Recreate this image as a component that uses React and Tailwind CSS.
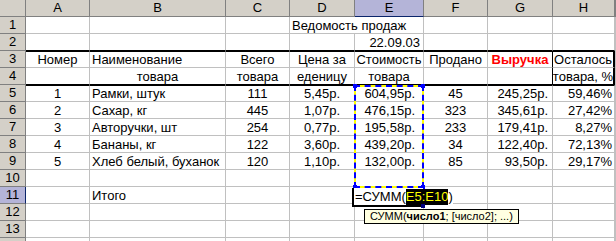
import * as React from "react";

const cols = ["A", "B", "C", "D", "E", "F", "G", "H"];

const rows = [
  ["1", "Рамки, штук", "111", "5,45р.", "604,95р.", "45", "245,25р.", "59,46%"],
  ["2", "Сахар, кг", "445", "1,07р.", "476,15р.", "323", "345,61р.", "27,42%"],
  ["3", "Авторучки, шт", "254", "0,77р.", "195,58р.", "233", "179,41р.", "8,27%"],
  ["4", "Бананы, кг", "122", "3,60р.", "439,20р.", "34", "122,40р.", "72,13%"],
  ["5", "Хлеб белый, буханок", "120", "1,10р.", "132,00р.", "85", "93,50р.", "29,17%"],
];

// alignment per column for data rows
const dataAlign = [
  "justify-center",
  "justify-start pl-[2px]",
  "justify-center",
  "justify-center",
  "justify-end pr-[8px]",
  "justify-center",
  "justify-end pr-[4px]",
  "justify-end pr-[2px]",
];

function Cell({ children, className = "" }) {
  return (
    <div
      className={`h-[17px] flex items-center whitespace-nowrap overflow-visible border-r border-b border-[#c0c0c0] leading-[16px] pt-[1px] ${className}`}
    >
      {children}
    </div>
  );
}

function ColHead({ label, active }) {
  return (
    <div
      className={`h-[17px] flex items-center justify-center border-r border-b border-r-[#808080] ${
        active ? "bg-[#b4b4d8] border-b-[#0a246a]" : "bg-[#d4d0c8] border-b-[#808080]"
      }`}
    >
      {label}
    </div>
  );
}

function RowHead({ n, hideLabel }) {
  const active = n === 11;
  return (
    <div
      className={`h-[17px] flex items-center justify-center border-r border-b border-b-[#808080] ${
        active ? "bg-[#b4b4d8] border-r-[#0a246a]" : "bg-[#d4d0c8] border-r-[#808080]"
      }`}
    >
      {hideLabel ? null : n}
    </div>
  );
}

function blankRow(n, hideLabel = false) {
  return [
    <RowHead key={`h${n}`} n={n} hideLabel={hideLabel} />,
    ...cols.map((c) => <Cell key={`${c}${n}`} />),
    <Cell key={`I${n}`} />,
  ];
}

export default function App() {
  const cells = [];

  // header
  cells.push(<div key="corner" className="h-[17px] bg-[#d4d0c8] border-r border-b border-[#808080]" />);
  cols.forEach((c) => cells.push(<ColHead key={c} label={c} active={c === "E"} />));
  cells.push(<ColHead key="I" label="" />);

  // row 1
  cells.push(<RowHead key="h1" n={1} />);
  cells.push(<Cell key="A1" />, <Cell key="B1" />, <Cell key="C1" />);
  cells.push(
    <Cell key="D1" className="col-span-2 pl-[2px]">
      Ведомость продаж
    </Cell>
  );
  cells.push(<Cell key="F1" />, <Cell key="G1" />, <Cell key="H1" />, <Cell key="I1" />);

  // row 2
  cells.push(<RowHead key="h2" n={2} />);
  ["A", "B", "C", "D"].forEach((c) => cells.push(<Cell key={`${c}2`} className="border-b-black" />));
  cells.push(
    <Cell key="E2" className="justify-end pr-[3px] border-b-black">
      22.09.03
    </Cell>
  );
  ["F", "G", "H"].forEach((c) => cells.push(<Cell key={`${c}2`} className="border-b-black" />));
  cells.push(<Cell key="I2" />);

  // rows 3-4 (headers)
  const h3 = ["Номер", "Наименование", "Всего", "Цена за", "Стоимость", "Продано", "Выручка", "Осталось"];
  const h4 = ["", "товара", "товара", "еденицу", "товара", "", "", "товара, %"];
  cells.push(<RowHead key="h3" n={3} />);
  h3.forEach((t, i) =>
    cells.push(
      <Cell
        key={`h3${i}`}
        className={`border-t border-t-black pt-0 ${i === 1 ? "justify-start pl-[2px]" : "justify-center"} ${
          i === 6 ? "font-bold text-[#ff0000] border-r-black" : ""
        } ${i === 7 ? "border-r-2 border-r-black" : ""}`}
      >
        {t}
      </Cell>
    )
  );
  cells.push(<Cell key="I3" />);
  cells.push(<RowHead key="h4" n={4} />);
  h4.forEach((t, i) =>
    cells.push(
      <Cell
        key={`h4${i}`}
        className={`justify-center border-b-black ${i === 6 ? "border-r-black" : ""} ${
          i === 7 ? "border-r-2 border-r-black" : ""
        }`}
      >
        {t}
      </Cell>
    )
  );
  cells.push(<Cell key="I4" />);

  // data rows 5-9
  rows.forEach((r, ri) => {
    const n = ri + 5;
    cells.push(<RowHead key={`h${n}`} n={n} />);
    r.forEach((v, i) =>
      cells.push(
        <Cell key={`${n}-${i}`} className={`${dataAlign[i]} ${ri === 0 ? "border-t border-t-black pt-0" : ""}`}>
          {v}
        </Cell>
      )
    );
    cells.push(<Cell key={`I${n}`} />);
  });

  // row 10
  cells.push(...blankRow(10));

  // row 11
  cells.push(<RowHead key="h11" n={11} />);
  cells.push(<Cell key="A11" />);
  cells.push(
    <Cell key="B11" className="pl-[2px]">
      Итого
    </Cell>
  );
  ["C", "D", "E", "F", "G", "H", "I"].forEach((c) => cells.push(<Cell key={`${c}11`} />));

  cells.push(...blankRow(12));
  cells.push(...blankRow(13));
  cells.push(...blankRow(14, true));

  return (
    <div className="w-[616px] h-[241px] overflow-hidden bg-white text-[13px] text-black font-['Liberation_Sans',Arial,sans-serif]">
      <div className="relative grid grid-cols-[26px_64px_136px_64px_65px_69px_64px_65px_62px_1fr]">
        {cells}

        {/* marching-ants selection E5:E10 */}
        <div className="absolute left-[354px] top-[85px] w-[70px] h-[103px] border-2 border-[#ffff00]">
          <div className="absolute -inset-[2px] border-2 border-dashed border-[#0000ff]" />
          <div className="absolute -left-[3px] -top-[3px] w-[4px] h-[4px] bg-[#0000ff]" />
          <div className="absolute -right-[3px] -top-[3px] w-[4px] h-[4px] bg-[#0000ff]" />
          <div className="absolute -left-[3px] -bottom-[3px] w-[4px] h-[4px] bg-[#0000ff]" />
          <div className="absolute -right-[3px] -bottom-[3px] w-[4px] h-[4px] bg-[#0000ff]" />
        </div>

        {/* in-cell editor E11 */}
        <div className="absolute left-[352px] top-[188px] w-[71px] h-[19px] bg-white border-l-2 border-b-2 border-black">
          <div className="absolute left-[1px] top-[1px] h-[16px] flex items-center whitespace-nowrap bg-white leading-[16px]">
            <span>=СУММ(</span>
            <span className="bg-black text-[#ffff00]">E5:E10</span>
            <span>)</span>
          </div>
          <div className="absolute -right-[2px] -bottom-[3px] w-[4px] h-[4px] bg-[#000080]" />
        </div>

        {/* function tooltip */}
        <div className="absolute left-[364px] top-[209px] h-[15px] px-[5px] flex items-center bg-[#ffffe1] border border-black text-[11px] leading-[13px] whitespace-nowrap">
          <span>СУММ(</span>
          <span className="font-bold">число1</span>
          <span>; [число2]; ...)</span>
        </div>
      </div>
    </div>
  );
}
